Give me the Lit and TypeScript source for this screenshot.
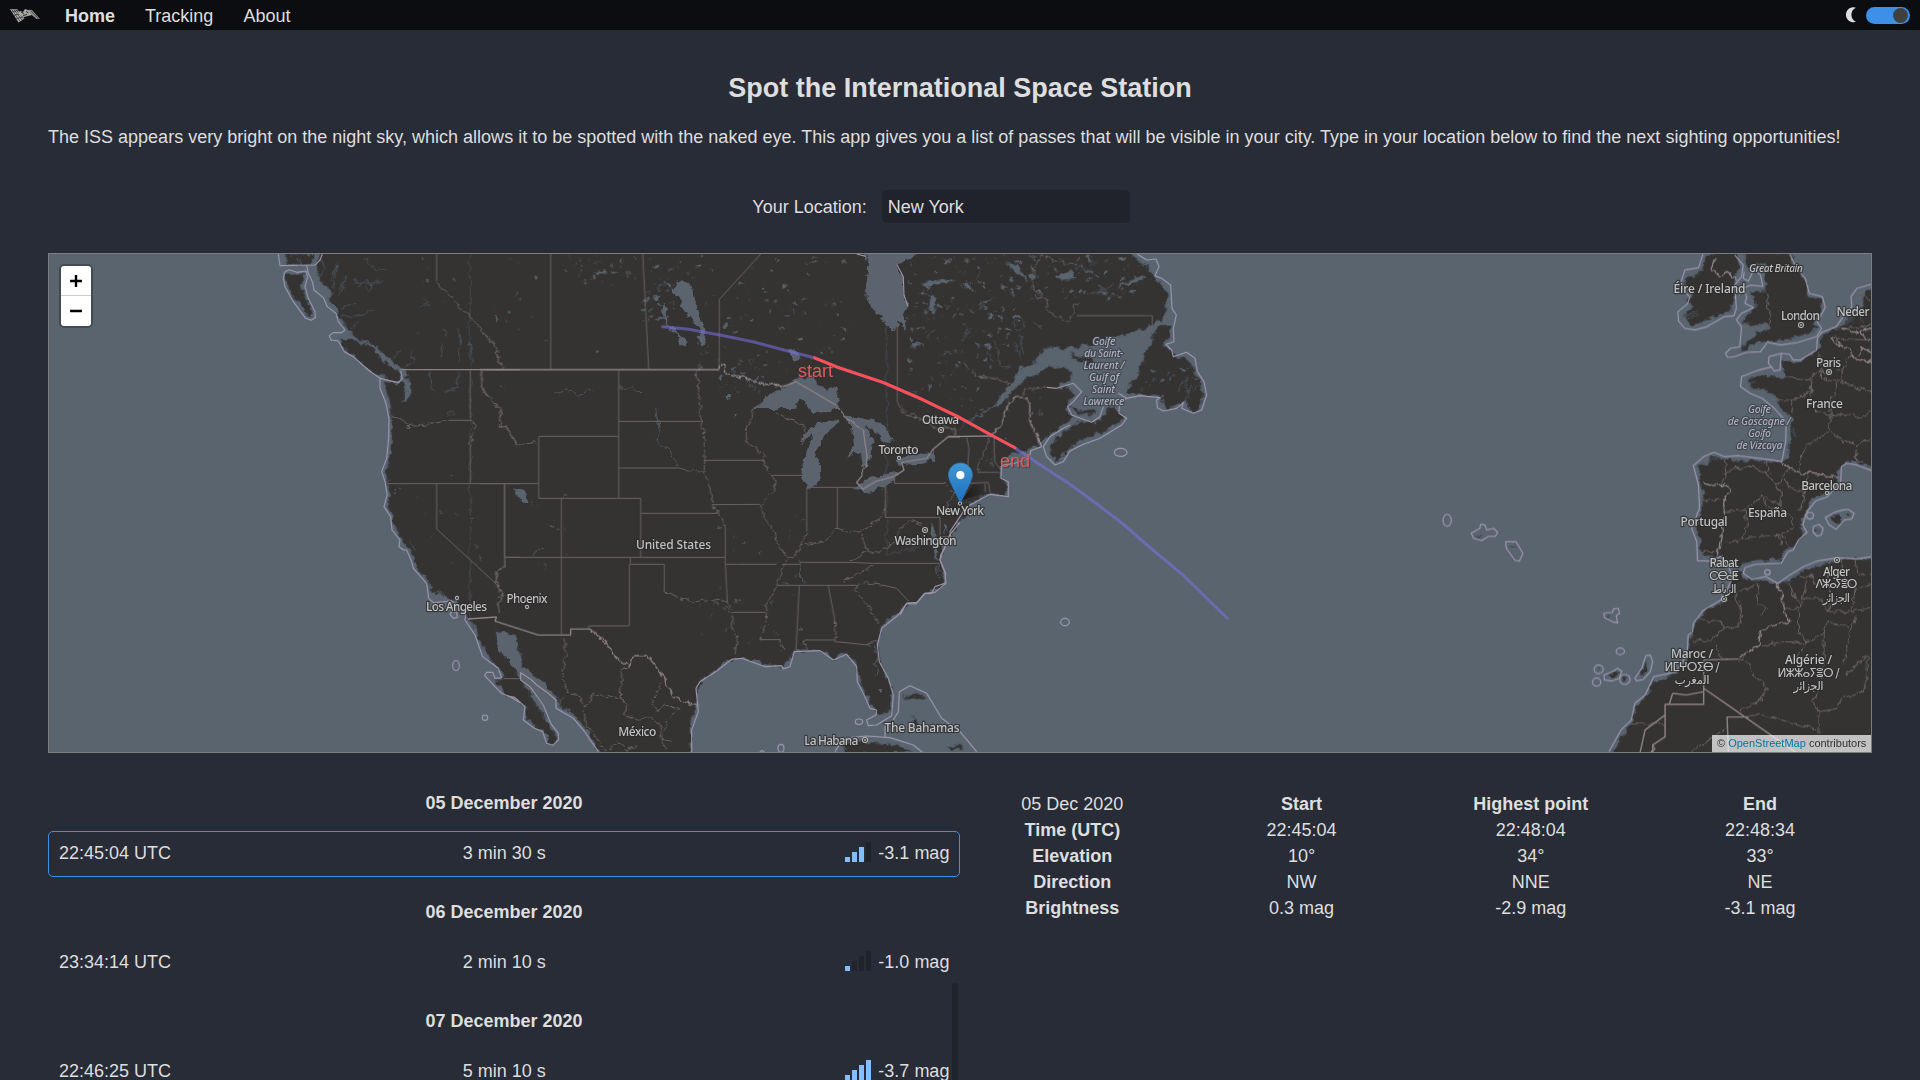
import { LitElement, html, svg, css } from "lit";
import { customElement, property } from "lit/decorators.js";

type Label = { t: string; x: number; y: number; w: number; kind?: "sea" | "native" | "isle" };
type Pass = { date: string; time: string; duration: string; mag: string; level: number; selected?: boolean };

const passes: Pass[] = [
  { date: "05 December 2020", time: "22:45:04 UTC", duration: "3 min 30 s", mag: "-3.1 mag", level: 3, selected: true },
  { date: "06 December 2020", time: "23:34:14 UTC", duration: "2 min 10 s", mag: "-1.0 mag", level: 1 },
  { date: "07 December 2020", time: "22:46:25 UTC", duration: "5 min 10 s", mag: "-3.7 mag", level: 4 },
];

const details: string[][] = [
  ["05 Dec 2020", "Start", "Highest point", "End"],
  ["Time (UTC)", "22:45:04", "22:48:04", "22:48:34"],
  ["Elevation", "10°", "34°", "33°"],
  ["Direction", "NW", "NNE", "NE"],
  ["Brightness", "0.3 mag", "-2.9 mag", "-3.1 mag"],
];

const labels: Label[] = [
  { t: "Los Angeles", x: 456.5, y: 611, w: 61 },
  { t: "Phoenix", x: 527, y: 603, w: 41 },
  { t: "United States", x: 673.5, y: 549, w: 75 },
  { t: "México", x: 637.3, y: 735.5, w: 38 },
  { t: "La Habana", x: 831.3, y: 744.5, w: 54 },
  { t: "The Bahamas", x: 922, y: 732, w: 75 },
  { t: "Ottawa", x: 940.5, y: 424, w: 37 },
  { t: "Toronto", x: 898.5, y: 454, w: 40 },
  { t: "New York", x: 960, y: 515, w: 48 },
  { t: "Washington", x: 925.5, y: 544.5, w: 62 },
  { t: "Golfe", x: 1103.8, y: 344.5, w: 23, kind: "sea" },
  { t: "du Saint-", x: 1103.8, y: 356.5, w: 39, kind: "sea" },
  { t: "Laurent /", x: 1104, y: 368.5, w: 41, kind: "sea" },
  { t: "Gulf of", x: 1104, y: 380.5, w: 30, kind: "sea" },
  { t: "Saint", x: 1103.5, y: 392.5, w: 23, kind: "sea" },
  { t: "Lawrence", x: 1103.8, y: 404.5, w: 41, kind: "sea" },
  { t: "Great Britain", x: 1776, y: 271.5, w: 54, kind: "isle" },
  { t: "Éire / Ireland", x: 1709.5, y: 293, w: 72 },
  { t: "London", x: 1800.5, y: 319.5, w: 39 },
  { t: "Neder", x: 1853, y: 315.5, w: 33 },
  { t: "Paris", x: 1828.5, y: 366.5, w: 25 },
  { t: "France", x: 1824.5, y: 407.5, w: 37 },
  { t: "Golfe", x: 1759.5, y: 412.5, w: 23, kind: "sea" },
  { t: "de Gascogne /", x: 1759.3, y: 424.5, w: 63, kind: "sea" },
  { t: "Golfo", x: 1759.5, y: 436.5, w: 23, kind: "sea" },
  { t: "de Vizcaya", x: 1759.5, y: 448.5, w: 46, kind: "sea" },
  { t: "Barcelona", x: 1826.8, y: 489.5, w: 51 },
  { t: "España", x: 1767.5, y: 517, w: 39 },
  { t: "Portugal", x: 1704, y: 526, w: 47 },
  { t: "Rabat", x: 1724, y: 567, w: 29 },
  { t: "ⵔⴱⴰⵟ", x: 1724, y: 580, w: 30, kind: "native" },
  { t: "الرباط", x: 1724, y: 593, w: 25, kind: "native" },
  { t: "Alger", x: 1836.5, y: 575.5, w: 27 },
  { t: "ⴷⵣⴰⵢⴻⵔ", x: 1836.5, y: 588, w: 42, kind: "native" },
  { t: "الجزائر", x: 1836.5, y: 602, w: 27, kind: "native" },
  { t: "Maroc /", x: 1692, y: 657.5, w: 42 },
  { t: "ⵍⵎⵖⵔⵉⴱ /", x: 1692, y: 671, w: 55, kind: "native" },
  { t: "المغرب", x: 1692, y: 684, w: 35, kind: "native" },
  { t: "Algérie /", x: 1808.5, y: 663.5, w: 47 },
  { t: "ⵍⵣⵣⴰⵢⴻⵔ /", x: 1808.5, y: 677, w: 62, kind: "native" },
  { t: "الجزائر", x: 1808.5, y: 690, w: 30, kind: "native" },
];

const capitals: number[][] = [
  [941, 430], [925, 530], [865, 740], [1801, 325], [1829, 372], [1724, 599], [1837, 560],
];
const towns: number[][] = [[457, 598], [527, 607], [899, 458], [960, 503.5], [1827, 493]];

/* Traced geometry, in thirds of a pixel; each sheet has its own origin. */
const sheets = { w: "translate(120 735)", c: "translate(1440 735)", e: "translate(2700 735)", d: "translate(4140 735) scale(1.033 1)" };

const land = svg`
  <g transform=${sheets.w}>
    <path d="M735 27H825L815 58H738ZM740 85L765 92L795 83L785 120L795 155L815 195L818 212L800 208L775 175L750 140L738 105Z"/>
    <path d="M850 15L825 60L838 95L845 115L865 130L875 150L868 165L888 190L895 210L905 230L918 245L935 268L960 285L1000 300L1022 320L1048 345L1080 368L1100 385L1092 400L1110 420L1108 460L1092 465L1100 425L1085 408L1075 415L1030 405L1042 440L1052 480L1054 530L1054 590L1050 640L1036 680L1043 700L1048 740L1045 785L1058 815L1064 850L1085 878L1095 898L1110 915L1122 940L1130 965L1148 990L1168 1015L1174 1042L1210 1047L1225 1062L1250 1070L1260 1090L1283 1118L1308 1155L1330 1215L1362 1250L1388 1275L1390 1300L1365 1307L1392 1330L1450 1368L1460 15Z"/>
    <path d="M900 278L930 280L960 292L1000 305L1020 325L1040 350L1065 365L1083 385L1078 408L1050 403L1020 392L990 375L960 350L930 322L912 305Z"/>
  </g>
  <g transform=${sheets.c}>
    <path d="M-30 15H1470V800L1410 860L1395 890L1382 940L1392 985L1396 1010L1380 1030L1340 1045L1310 1070L1280 1080L1230 1120L1202 1150L1192 1200L1198 1240L1217 1290L1237 1330L1237 1370L1225 1402L1200 1410L1183 1390L1158 1350L1140 1310L1128 1258L1100 1225L1060 1240L1035 1222L1000 1216L940 1218L930 1250L905 1264L865 1262L830 1248L780 1238L745 1247L700 1280L667 1302L650 1330L652 1380L638 1400L633 1450V1540H370L330 1470L300 1430L270 1400L240 1385L235 1358L200 1335L188 1306L165 1296L130 1266L128 1250L114 1215L110 1182L85 1164L48 1155L52 1185L62 1225L90 1245L97 1265L115 1290L133 1320L152 1350L177 1385L196 1420L217 1450L231 1475L226 1497L206 1492L193 1457L165 1442L140 1422L133 1380L108 1362L80 1352L45 1310L70 1300L68 1278L42 1252L10 1215L-12 1155L-30 1120Z"/>
    <path d="M1085 1524L1100 1495L1150 1487L1200 1500L1250 1495L1290 1524ZM1265 1355L1330 1345L1335 1358L1290 1362ZM1300 1410L1312 1440L1295 1438ZM1400 1505L1440 1500L1450 1512L1410 1515Z"/>
  </g>
  <g transform=${sheets.e}>
    <path d="M-40 15H690L712 45L748 65L750 85L780 118L803 140L800 200L788 222L752 243L700 257L680 272L620 282L560 302L500 310L440 307L420 322L410 352L370 367L340 402L310 447L280 482L215 522L180 548L270 492L312 470L342 435L372 405L402 385L440 368L480 362L510 375L512 400L470 427L500 425L520 450L505 470L500 497L518 515L500 535L460 560L436 580L424 600L380 615L330 628L308 645L300 668L300 690L312 706L322 725L320 750L298 745L268 745L240 757L192 775L186 795L178 830L150 880L-40 930Z"/>
    <path d="M505 325L545 335L580 350L592 362L560 357L530 345ZM805 235L815 245L808 270L795 300L822 332L860 342L880 370L898 405L908 450L895 488L872 498L850 465L825 485L800 490L786 470L790 457L750 450L710 450L680 443L684 428L705 405L722 360L740 320L760 270L780 242ZM450 598L490 565L530 530L600 530L620 500L640 480L655 500L675 520L640 545L600 562L560 580L510 608L470 650L450 630ZM508 480L540 500L580 492L590 505L555 512L520 500Z"/>
  </g>
  <g transform=${sheets.d}>
    <path d="M945 35L985 20H1040L1045 70L1030 95L1030 150L1022 198L985 207L945 227L905 240L882 215L905 182L893 165L905 145L885 125L893 92L930 85L940 60Z"/>
    <path d="M1060 20H1190L1200 60L1222 80L1237 115L1242 158L1280 165L1287 190L1265 215L1255 235L1275 247L1240 268L1200 280L1150 287L1120 290L1090 296L1065 312L1043 320L1065 290L1090 267L1132 247L1122 235L1090 242L1053 232L1065 210L1090 190L1087 155L1073 140L1115 135L1125 120L1120 85L1128 60L1090 52L1070 75L1058 50Z"/>
    <path d="M1440 130L1405 140L1402 172L1385 202L1350 225L1338 247L1310 255L1280 275L1275 310L1240 335L1215 352L1185 352L1165 340L1168 365L1180 397L1140 398L1118 385L1068 402L1078 430L1120 437L1155 460L1165 492L1195 515L1195 555L1188 605L1175 650L1130 650L1060 648L1000 642L968 635L945 655L920 660L927 690L935 720L938 760L932 810L918 855L930 880L933 930L985 935L1010 950L1040 968L1060 955L1100 945L1155 945L1175 915L1205 905L1232 863L1220 835L1235 800L1255 765L1290 745L1328 715L1330 680L1345 657L1385 650L1440 668Z"/>
    <path d="M1440 940L1370 943L1320 950L1270 962L1220 980L1190 1007L1150 1015L1110 1008L1060 1000L1042 975L1032 990L1020 1030L1000 1070L955 1092L917 1130L902 1170L897 1205L890 1240L862 1280L830 1300L792 1310L777 1345L742 1390L735 1425L697 1480L672 1540H1440Z"/>
    <path d="M1308 822L1325 808L1340 822L1325 838ZM1352 806L1366 808L1360 816ZM1265 855L1275 850L1270 862ZM668 1295L680 1280L695 1283L680 1300ZM760 1275L778 1245L775 1275L762 1297ZM702 1300L712 1294L716 1305L706 1310ZM632 1272L638 1270L636 1280ZM660 1110L672 1115L660 1118ZM375 902H392V906H378ZM285 870L298 874L288 876Z"/>
  </g>`;

const water = svg`
  <g transform=${sheets.c}>
    <path d="M48 1155L85 1164L110 1182L114 1215L128 1250L130 1266L165 1296L190 1308L205 1340L238 1362L215 1375L190 1390L165 1366L133 1320L115 1290L97 1265L90 1245L62 1225L52 1185Z"/>
    <path d="M1140 15L1155 30L1165 60L1158 130L1160 160L1190 205L1220 240L1243 257L1258 230L1278 255L1272 205L1284 180L1270 140L1268 100L1248 60L1290 45L1320 15Z"/>
    <path d="M583 115L610 106L635 122L642 160L657 205L672 250L680 292L660 302L655 250L620 205L598 165L581 145ZM560 195L545 170L550 210L560 245L590 248L600 275L620 290L617 310L602 302L590 262L563 252ZM520 155L545 152L535 165ZM930 312L955 315L960 340L945 353L930 340Z"/>
    <path d="M818 492L870 450L910 425L940 408L962 395L1000 398L1018 420L1040 437L1065 430L1080 470L1075 490L1040 502L1000 500L975 480L960 460L945 480L950 492L880 492Z"/>
    <path d="M962 592L975 560L1005 540L1035 530L1082 520L1070 540L1045 558L1030 585L1015 600L1005 630L1020 665L1020 695L1003 725L982 732L967 700L969 640L990 600L1000 568L985 575Z"/>
    <path d="M1090 515L1150 517L1198 530L1230 562L1244 592L1215 595L1195 570L1158 540L1180 590L1172 640L1148 675L1140 625L1118 622L1106 640L1105 622L1125 600L1120 560Z"/>
    <path d="M1118 725L1170 700L1210 690L1270 675L1240 705L1190 737L1150 742ZM1242 652L1270 633L1330 628L1362 620L1362 645L1310 657L1260 660Z"/>
    <path d="M106 730L130 735L144 765L130 777L115 755ZM765 508L775 512L768 520ZM1195 1335L1210 1335L1205 1350ZM740 452L755 455L742 470ZM345 310L358 318L346 322ZM1355 830L1365 860L1358 890L1372 930L1380 945L1366 935L1350 880ZM1390 840L1400 850L1395 870Z"/>
    <path class="stream" d="M220 445L260 430L290 450L335 435M416 425L460 430L485 445M530 495L540 545L530 590L570 620L590 660M60 420L72 435M160 930L190 910M1370 965L1380 1000M1183 1205L1190 1290M960 945L962 1010"/>
  </g>
  <g transform=${sheets.w}>
    <path d="M915 245L935 270L960 285L1005 310L1020 340L1060 370L1085 380L1070 360L1040 340L1025 315L985 295L950 278ZM1425 732L1440 735L1450 765L1435 760ZM1085 390L1105 405L1110 440L1100 468L1090 465L1102 440L1095 410Z"/>
    <path class="stream" d="M880 130L890 60L870 110M895 150L920 90M900 190L950 175M905 215L970 210L1000 190M930 250L960 230M975 40L1000 70L1040 72M940 105L975 120L1030 105M955 128L975 110L1000 125L985 140L972 130M1140 185L1175 180M1255 250L1262 300L1255 350M1210 250L1225 275M1290 290L1300 355M1200 340L1210 300M1170 380L1175 430L1190 440M1210 440L1250 430L1258 380M1225 515L1240 500M1200 790L1205 808M1110 890L1125 915M1060 345L1080 320M840 90L855 70L840 40M770 40L780 60M1090 370L1120 350L1115 320"/>
  </g>
  <g transform=${sheets.e}>
    <path d="M470 95L510 75L530 100L500 108ZM655 122L720 92L740 95L690 120ZM60 118L120 100L170 105L80 128ZM320 50L355 65L385 110L370 100L330 70ZM88 150L110 160L100 205L85 185ZM240 390L258 398L245 404ZM225 110L250 70L235 90Z"/>
    <path class="stream" d="M185 290L215 255M190 275L205 252M345 245A17 17 0 1 1 346 246M340 290L365 345M285 280L295 350L330 370M360 270L370 330M540 60L600 100M560 150L640 120M400 230L430 250M100 255L80 280M130 320L160 330M855 470L870 420M835 440L860 400M880 440L895 420M260 320L280 345M205 770L270 752M100 860L110 900M110 940L120 980"/>
  </g>
  <g transform=${sheets.d}>
    <path class="stream" d="M890 225L930 205M885 215L920 200M1340 240L1380 225M1345 230L1385 215M1195 560L1210 575M1070 410L1090 415"/>
  </g>`;

const coast = svg`
  <g transform=${sheets.w}>
    <path d="M715 27L720 62L825 60L840 45L847 27M735 80L748 74L770 82L798 78L803 95L795 125L805 160L825 200L826 218L813 226L797 220L760 170L735 125L730 100ZM800 62L805 85L818 112L822 135L850 158L862 185L888 205L895 230L915 255L905 263L880 263L868 272L873 285L895 288L913 320L940 335L985 375L1020 400L1075 413L1087 400L1082 378M1020 400L1020 430L1038 475L1047 520L1046 580L1040 640L1025 680L1035 710L1042 750L1032 785L1052 815L1056 855L1080 885L1077 905L1090 915L1100 915L1115 950L1120 970L1160 1015L1166 1060L1180 1073L1235 1068L1260 1085L1278 1110L1275 1125L1305 1170L1328 1235L1375 1270L1385 1298L1365 1300L1358 1282L1340 1282L1334 1292L1365 1325L1385 1345L1410 1355L1442 1374M1235 1100L1250 1103L1252 1117L1240 1120L1230 1108Z"/>
    <ellipse cx="1248" cy="1262" rx="10" ry="15"/><circle cx="1335" cy="1418" r="8"/>
  </g>
  <g transform=${sheets.c}>
    <path d="M80 1352L105 1358L135 1385L130 1425L160 1448L188 1460L200 1495L218 1501L235 1485L235 1465L212 1435L190 1380L150 1325L122 1305L122 1283L155 1305L170 1320L205 1345L228 1365L228 1390L280 1420L310 1455L355 1520M635 1524L635 1455L655 1400L648 1330L660 1310L710 1278L755 1243L785 1240L855 1265L905 1262L910 1272L930 1265L943 1220L1020 1217L1060 1245L1100 1228L1130 1265L1132 1310L1155 1355L1170 1390L1190 1395L1188 1410L1160 1425L1165 1442L1190 1440L1235 1412L1240 1350L1225 1300L1198 1250L1192 1200L1205 1150L1255 1110L1280 1075L1310 1072L1335 1045L1365 1042L1398 1015L1395 985L1380 945L1395 905L1410 868L1440 832M1240 1425L1255 1400L1258 1340L1290 1322L1340 1345L1385 1420L1440 1460L1490 1520M1065 1520L1090 1480L1160 1473L1230 1478L1300 1500L1330 1524M1215 1440L1215 1475"/>
    <ellipse cx="1137" cy="1430" rx="11" ry="8"/><ellipse cx="903" cy="1510" rx="9" ry="12"/><path d="M838 1524Q846 1510 854 1524"/>
    <path d="M1130 27L1158 34M1250 58L1270 95L1272 150L1284 185"/>
  </g>
  <g transform=${sheets.e}>
    <path d="M712 27L740 45L768 42L777 65L765 92L785 100L812 120L816 190L829 210L820 250L822 290L798 298L815 315L820 335L860 322L885 340L892 380L912 410L920 450L905 495L880 505L845 490L850 472L830 490L790 498L772 488L770 465L780 458L720 452L680 460L658 475L657 505L680 520L665 540L600 580L545 600L510 618L490 650L465 660L440 635L430 605L450 575L490 550L510 540M392 617L425 605L415 578M392 617L388 640L345 655L305 660L303 700L325 710L325 755L270 748L195 788L190 800L150 860L152 875L122 930L120 945L137 985L135 1015L105 1025L95 1045L75 1045L48 1077L20 1075L0 1110M470 430L520 415L545 440L520 470L503 485L515 510L575 532L600 515L610 485M440 427L470 430M655 445L680 460"/>
    <ellipse cx="662" cy="622" rx="19" ry="12"/><ellipse cx="495" cy="1131" rx="13" ry="11"/>
  </g>
  <g transform=${sheets.d}>
    <path d="M938 27L925 68L885 75L875 110L885 142L900 155L893 177L865 200L867 228L885 250L915 255L950 245L1000 215L1028 212L1035 190L1030 120L1050 95L1055 60L1030 30M1190 27L1210 70L1235 100L1247 145L1285 155L1293 187L1270 232L1283 250L1268 275L1215 292L1165 300L1125 292L1105 320L1065 322L1030 335L1010 337L1003 325L1018 310L1045 305L1050 245L1035 225L1050 205L1085 188L1060 175L1065 157L1055 130L1075 120L1112 124L1105 90L1085 75L1070 108L1055 100L1058 80M1427 118L1385 130L1368 155L1370 185L1345 215L1325 245L1283 262L1270 280L1268 315L1220 345L1200 345L1190 328L1165 325L1130 335L1128 355L1145 378L1162 375L1165 325M1140 365L1100 375L1050 395L1047 425L1075 445L1110 460L1145 490L1180 530L1178 590L1167 650L1140 645L1040 632L1000 635L970 622L940 635L910 662L925 720L928 790L905 850L920 890L922 947L960 948L990 935L1015 970L1022 1000L1010 1030L990 1065L940 1095L910 1135L908 1160L895 1170L893 1210L885 1240L860 1280L795 1295L770 1350L740 1375L730 1425L700 1455L665 1520M1427 677L1385 660L1355 655L1340 665L1338 710L1320 730L1300 755L1265 768L1240 800L1228 840L1240 862L1215 885L1200 915L1185 920L1165 955L1090 958L1060 968L1055 985L1080 1003L1120 995L1155 1015L1190 990L1230 965L1270 948L1330 938L1385 942L1427 935"/>
    <ellipse cx="195" cy="826" rx="12" ry="18"/><path d="M265 865L290 850L292 838L305 840L310 855L330 850L342 862L335 874L315 874L295 887L272 880ZM365 890L395 890L415 925L405 948L392 946L367 910Z"/>
    <path d="M650 1105L675 1102L678 1092L692 1090L696 1105L686 1112L690 1134L675 1130L652 1118ZM740 1300L760 1270L772 1232L785 1230L792 1250L785 1280L765 1303L745 1308ZM650 1290L675 1280L690 1270L702 1278L695 1300L672 1308L652 1305Z"/>
    <ellipse cx="698" cy="1219" rx="12" ry="10"/><circle cx="635" cy="1273" r="13"/><circle cx="629" cy="1311" r="12"/><circle cx="711" cy="1303" r="15"/><circle cx="1249" cy="812" r="10"/><circle cx="1125" cy="982" r="8"/>
    <path d="M1293 818L1325 800L1345 795L1360 793L1377 805L1370 822L1348 825L1325 853L1305 840ZM1258 845L1275 838L1287 850L1282 870L1270 874L1258 862Z"/>
  </g>`;

const states = svg`
  <g transform=${sheets.w}>
    <path d="M1190 27V110M1043 716H1440M1291 377V520M1291 600V716M1325 377V427M1190 716V852L1372 1020M1393 716V937H1440M1225 526H1294M1390 1301H1440"/>
    <g class="rough"><path d="M1190 110L1200 128L1225 145L1260 190L1300 225L1350 285L1372 310L1376 350L1392 372M1325 427L1350 465L1384 495L1380 545L1400 545L1430 600M1291 520L1308 542L1287 600M1056 513L1085 518L1100 545L1165 540L1225 526M1393 937L1392 972L1370 975L1372 1020L1388 1050L1375 1075L1378 1105"/></g>
  </g>
  <g transform=${sheets.c}>
    <path d="M212 27V372M488 27L506 372M718 372V163L842 27M416 377V760M416 529H668M416 669H600M176 574H416M176 574V760H482V937M482 805H712M0 716H176M74 716V965M74 937H736M244 760V1168M451 937V958H553V1040M448 958V1143H326V1152M736 845V958L742 1075M736 958H890M757 1102H855M672 646H850M697 779L840 778M875 691H993L1000 620L1022 560L990 553L965 600M980 727H1125M980 727V860M1072 727V850M1216 700V817H1380M1243 690V715H1395M1380 817V875H1410M960 952L1110 952L1178 955H1378M890 1021H1130M958 1023L948 1215M1045 1023L1065 1130M975 1185H1065M838 1184H902M1068 1190L1165 1200M1205 1020L1250 1030L1285 1068M1252 235V470M882 492L910 425M820 490L870 460H896M905 958H960"/>
    <g class="rough"><path d="M0 255L45 300L55 350L72 372M5 377V425L30 460L62 495L60 545L80 545L110 600L172 592M600 669L620 678L650 676L672 690M650 377L655 430L662 490L664 540L672 560L674 640L672 680L690 730L697 780L725 820L736 845M553 1040L600 1058L640 1072L665 1065L700 1068L725 1066L752 1080L757 1140L772 1180L765 1225M820 492L815 520L798 545L800 590L850 630L855 665L888 710L880 740L845 780L850 820L885 860L890 890L915 930L925 940L905 975L885 1030L860 1080L858 1130L840 1180M902 1184L908 1215M886 500L920 520L970 540L975 562M980 860L965 900L945 930L920 935M965 900L1030 890L1072 850L1110 862L1145 860L1175 835L1200 820L1216 780M1145 860L1150 890L1165 920L1200 925L1240 890L1255 860L1290 825L1325 840M1165 915L1110 952M1178 962L1130 990L1088 1010M1065 1130L1068 1190M1165 1205L1168 1192L1190 1190M975 1185L980 1210M1120 1030L1150 1013L1205 1020M1120 1030L1160 1080L1200 1140M1252 470L1270 505L1340 520L1400 545L1420 560M1395 715L1425 745L1400 770L1410 800M74 965L50 975L52 1020L68 1050L55 1075L58 1105M250 1172L258 1230L245 1290L262 1345L300 1352L315 1385L340 1350L420 1360L425 1280L445 1262M420 1360L440 1380L435 1410L470 1425L510 1415L545 1440L540 1480L560 1510M545 1310L530 1350L515 1365L530 1400L555 1380L600 1390L560 1430L545 1480L580 1490M310 1395L320 1440L350 1480L380 1524M262 1345L240 1365M390 1510L410 1490L440 1515L470 1500"/></g>
  </g>
  <g transform=${sheets.e}>
    <path d="M530 212H757V243L640 385M200 577L207 610L202 680M202 715L265 712L270 742M232 682H298M282 575L284 650L300 670M255 715V740M610 485L600 478M490 550L515 525"/>
    <g class="rough"><path d="M430 30L400 70L395 110L412 160L440 160L445 200L485 220L505 235L522 205L520 180L540 170M435 35L480 50L500 55L530 60L535 30M265 575L262 600L240 640L232 682M0 480L25 512L80 530L100 550L165 550L165 570M330 417L290 400L230 395L185 350M370 450L375 430L440 425"/></g>
  </g>
  <g class="rough"><g transform=${sheets.d}>
    <path d="M1120 135L1130 160L1125 190L1137 215L1130 245M1050 245L1125 240M1180 397L1250 402L1250 440L1200 465L1155 465M1250 400L1262 385L1285 375L1275 345L1275 320M1285 375L1285 400L1310 408L1338 405L1340 380L1325 372M1340 380L1365 330M1325 410L1325 440L1310 455L1310 510L1300 560L1275 580L1240 600L1222 625L1220 680M1255 400L1250 460L1265 500L1310 508M1310 510L1350 505L1395 520L1427 500M1340 410L1390 430L1427 435M1310 560L1340 590L1365 590L1385 600L1427 580M1190 465L1200 500M1385 600L1380 640L1400 655M1315 255L1325 250L1380 250L1427 240M1310 280L1427 285M1000 642L1005 690L990 715M1000 690L1020 670L1080 665L1130 690L1120 650M1120 680L1150 720L1165 740L1165 780L1110 750L1085 780L1060 790L1065 840L1055 880L1100 875L1160 870L1165 900M1110 750L1120 785L1160 790L1165 770M1165 700L1190 670M1150 720L1175 700L1190 730L1235 740L1230 780L1215 800M1235 740L1240 690M1165 790L1190 810L1200 850L1150 875M1000 800L1060 795M1005 890L1040 890L1060 865M935 765L985 765M985 920L935 920M1165 870L1185 900M905 1190L960 1185L1000 1150L1040 1145L1050 1100L1035 1060L1030 1040M925 1115L950 1130L985 1125L1000 1150M1030 1040L1100 1020L1095 1070L1125 1090L1105 1110M970 1190L985 1230L1010 1245M1170 1090L1220 1090L1230 1050L1240 1000M1190 1010L1200 1050L1225 1080M1230 1060L1280 1060L1300 1100L1360 1100L1427 1090M1250 985L1265 1020L1300 1010L1310 960M1300 1010L1320 1060L1300 1100M1340 950L1350 1000L1380 1030L1427 1020M1350 1000L1320 1030M1380 945L1385 990L1427 985M1380 1030L1370 1100M1215 1090L1215 1160L1240 1195L1290 1160L1300 1130L1370 1150L1380 1110M1190 985L1240 1000L1260 990M1105 1200L1180 1190L1240 1195L1190 1250M1370 1150L1345 1250M1290 1160V1250L1270 1350L1255 1370L1275 1400V1470M1040 1245L1070 1250L1085 1290L1125 1330L1100 1370L1045 1395M1275 1400L1330 1390L1340 1360L1400 1340L1415 1300V1230L1350 1290M735 1437L828 1437M1065 1415L1100 1408L1270 1452M1010 1445L905 1522M1370 130L1427 165M1400 165V230"/>
  </g></g>`;

const frontiers = svg`
  <g transform=${sheets.w}><path d="M1080 374H1440M1283 1122L1370 1116"/></g>
  <g transform=${sheets.c}>
    <path d="M0 374H718M910 425L948 410L1068 480M1150 558L1162 640M1148 690L1130 712L1148 732L1190 708L1240 695L1272 675L1265 652L1340 640L1360 612L1405 575H1440M50 1116L45 1128L175 1170H272V1152H330"/>
    <g class="rough"><path d="M718 374V357L733 360L738 388L770 395L800 400L850 420L880 415L910 425M1068 480L1100 520L1150 558M1162 640L1148 690M330 1152L385 1200L400 1230L445 1262L465 1232L500 1232L535 1270L580 1355L610 1370L655 1383"/></g>
  </g>
  <g transform=${sheets.e}>
    <path d="M145 575L270 573"/>
    <g class="rough"><path d="M270 573L290 555L305 535L320 490L345 455L380 460L392 475L393 540L410 565L420 600"/></g>
  </g>
  <g transform=${sheets.d}>
    <path d="M940 1245V1378H828V1475L792 1500V1524M940 1330L1010 1380L1210 1524M1012 1524L1008 1416H1070M850 1345L840 1378M850 1345L890 1350L940 1340M828 1410L770 1455L755 1524M940 1245L1040 1242"/>
    <g class="rough"><path d="M960 75L990 95L1005 80L1040 108M975 40L960 75M1168 652L1195 672L1220 685L1250 685L1290 690L1330 698M935 715L965 722L1000 718L1018 738L998 768L1000 810L995 850L990 880L980 930M1150 1010L1168 1050L1170 1090L1190 1130L1130 1145L1105 1160L1100 1200L1045 1240M1310 275L1330 300L1365 312L1380 340L1427 350M1340 250L1380 262L1427 250M1390 330L1400 305L1427 320M1395 260L1410 280L1427 285M790 1524L800 1495"/></g>
  </g>`;

/** Deterministic scatter of small lakes: [x0, y0, x1, y1, count, largest radius]. */
const lakeFields: number[][] = [
  [1690, 765, 2120, 850, 60, 7], [1920, 850, 2020, 960, 50, 8], [2080, 765, 2560, 1120, 90, 6],
  [2720, 765, 3060, 1100, 150, 8], [3090, 770, 3420, 900, 80, 8], [2720, 1100, 2960, 1250, 34, 6],
  [1250, 770, 1640, 1060, 26, 5], [2150, 1080, 2290, 1180, 40, 6], [1180, 1380, 1700, 1700, 24, 4],
  [2150, 1550, 2420, 1960, 36, 4], [3560, 1010, 3600, 1220, 24, 5], [3420, 1110, 3560, 1170, 24, 5],
  [2960, 1350, 3100, 1400, 20, 5], [2100, 1800, 2240, 1920, 14, 4], [3000, 1130, 3140, 1350, 12, 5],
];

function scatterLakes(): string {
  let seed = 20201205;
  const rnd = () => {
    seed = (seed * 1664525 + 1013904223) >>> 0;
    return seed / 4294967296;
  };
  let d = "";
  for (const [x0, y0, x1, y1, count, max] of lakeFields) {
    for (let i = 0; i < count; i++) {
      const x = x0 + rnd() * (x1 - x0);
      const y = y0 + rnd() * (y1 - y0);
      const r = 1.5 + rnd() * rnd() * max;
      const k = r * (0.7 + rnd() * 1.2);
      const s = (rnd() - 0.5) * r * 1.6;
      d += `M${(x - k).toFixed(1)} ${(y + s).toFixed(1)}L${x.toFixed(1)} ${(y - r).toFixed(1)}L${(x + k).toFixed(1)} ${(y - s).toFixed(1)}L${x.toFixed(1)} ${(y + r * 0.7).toFixed(1)}Z`;
    }
  }
  return d;
}
const lakes = scatterLakes();

@customElement("pass-map")
class PassMap extends LitElement {
  static styles = css`
    :host { display: block; position: relative; box-sizing: border-box; height: 500px; border: 1px solid #7c7d80; background: #5a646e; overflow: hidden; }
    .canvas { display: block; width: 100%; height: 100%; }
    .land { fill: #353332; stroke: #4b5865; stroke-width: 2; }
    .water { fill: #5a646e; }
    .stream { fill: none; stroke: #4c5862; stroke-width: 3; }
    .shelf { fill: none; stroke: #5b687a; stroke-width: 9; stroke-linejoin: round; }
    .coast { fill: none; stroke: #9c93a3; stroke-width: 3.4; stroke-linejoin: round; }
    .states { fill: none; stroke: #6a6362; stroke-width: 3; }
    .frontiers { fill: none; stroke: #8d8187; stroke-width: 4.2; stroke-linejoin: round; }
    .rough { filter: url(#rough); }
    .label { font: 500 12px "Noto Sans", "DejaVu Sans", sans-serif; fill: #c2c2c2; stroke: #2c2c2c; stroke-width: 2.4px; stroke-opacity: .75; paint-order: stroke; text-anchor: middle; stroke-linejoin: round; }
    .sea { font-size: 10.5px; font-style: italic; fill: #b0aeba; stroke: #3b424c; }
    .isle { font-size: 10.5px; font-style: italic; }
    .native { font: 12px "DejaVu Sans", sans-serif; }
    .dot { fill: #303030; stroke: #b4b4b4; stroke-width: 1.1; }
    .core { fill: #b4b4b4; }
    .track { fill: none; stroke-width: 3; stroke-linecap: round; stroke-linejoin: round; }
    .orbit { stroke: #7a71e8; stroke-opacity: .55; }
    .visible { stroke: #ff5055; }
    .tip { font: 18px "Liberation Sans", Arial, sans-serif; fill: #e05a5e; text-anchor: middle; text-shadow: 1px 1px 1px #333a; }
    .zoom { position: absolute; left: 10px; top: 10px; width: 30px; border: 2px solid rgba(0, 0, 0, .25); border-radius: 5px; background-clip: padding-box; overflow: hidden; }
    .zoom button { display: flex; align-items: center; justify-content: center; box-sizing: border-box; width: 30px; height: 30px; padding: 0; border: 0; background: #fff; }
    .zoom button:first-child { border-bottom: 1px solid #ccc; }
    .credit { position: absolute; right: 0; bottom: 0; box-sizing: border-box; width: 159px; height: 17px; padding: 0 5px; background: rgba(255, 255, 255, .7); color: #333; font: 11px/16px "Liberation Sans", Arial, sans-serif; white-space: nowrap; }
    .credit a { color: #0078a8; text-decoration: none; }
  `;
  render() {
    return html`
      <svg class="canvas" viewBox="49 254 1822 498">
        <defs>
          <filter id="jag" filterUnits="userSpaceOnUse" x="100" y="700" width="5600" height="1650">
            <feTurbulence type="fractalNoise" baseFrequency="0.045" numOctaves="3" seed="4"/>
            <feDisplacementMap in="SourceGraphic" scale="24" xChannelSelector="R" yChannelSelector="G"/>
          </filter>
          <filter id="rough" filterUnits="userSpaceOnUse" x="-100" y="-100" width="6000" height="2500">
            <feTurbulence type="fractalNoise" baseFrequency="0.055" numOctaves="2" seed="9"/>
            <feDisplacementMap in="SourceGraphic" scale="20" xChannelSelector="R" yChannelSelector="G"/>
          </filter>
          <linearGradient id="pin" x1="0" y1="0" x2="0" y2="1"><stop offset="0" stop-color="#4197d4"/><stop offset="1" stop-color="#1c6fbf"/></linearGradient>
          <linearGradient id="shade" x1="0" y1="0" x2="1" y2="0"><stop offset="0" stop-color="#000" stop-opacity=".5"/><stop offset="1" stop-color="#000" stop-opacity="0"/></linearGradient>
        </defs>
        <g transform="scale(.33333)">
          <g class="shelf">${coast}</g>
          <g filter="url(#jag)">
            <g class="land">${land}</g>
            <g class="water">${water}<path d=${lakes}/></g>
          </g>
          <g class="states">${states}</g>
          <g class="frontiers">${frontiers}</g>
          <g class="coast">${coast}</g>
        </g>
        ${capitals.map(([x, y]) => svg`<circle class="dot" cx=${x} cy=${y} r="2.5"/><circle class="core" cx=${x} cy=${y} r="1"/>`)}
        ${towns.map(([x, y]) => svg`<circle class="dot" cx=${x} cy=${y} r="1.6"/>`)}
        ${labels.map((l) => svg`<text class="label ${l.kind ?? ""}" x=${l.x} y=${l.y} textLength=${l.w}>${l.t}</text>`)}
        <path class="track orbit" d="M662.7 326.7L687 329L720 335L753 341.7L787 350.7L814 357.7L838 367.5L883 382.5L920 398.5L960 418L988 433.5L1015 448L1043 466.7L1070 484.3L1097 504L1123 524L1153 550L1183 575L1207 598.5L1227.3 618.3"/>
        <path class="track visible" d="M814.5 357.8L838 367.3L883 382.3L920 398.3L960 417.7L988 433.3L1015 447.8"/>
        <text class="tip" x="815.5" y="377">start</text>
        <text class="tip" x="1015" y="467">end</text>
        <path fill="url(#shade)" d="M962 500L973 485L986 484L986 493Z"/>
        <g transform="translate(948 462.5)">
          <path fill="url(#pin)" stroke="#2f7fc0" stroke-width=".8" d="M12.4 .5C5.8 .5.5 5.8.5 12.3C.5 15 1.5 17.6 2.6 20L12.4 40L22.2 20C23.3 17.6 24.3 15 24.3 12.3C24.3 5.8 19 .5 12.4 .5Z"/>
          <circle cx="12.4" cy="12.5" r="4.6" fill="#fff" stroke="#2d79b8" stroke-width=".8"/>
        </g>
      </svg>
      <div class="zoom">
        <button aria-label="Zoom in"><svg width="12" height="12"><path d="M0 6H12M6 0V12" stroke="#000" stroke-width="2.4"/></svg></button>
        <button aria-label="Zoom out"><svg width="12" height="12"><path d="M0 6H12" stroke="#000" stroke-width="2.4"/></svg></button>
      </div>
      <div class="credit">© <a>OpenStreetMap</a> contributors</div>
    `;
  }
}

@customElement("pass-strength")
class PassStrength extends LitElement {
  @property({ type: Number }) level = 0;
  static styles = css`
    :host { display: flex; align-items: flex-end; gap: 2px; height: 20px; }
    .bar { width: 5px; background: #21232c; }
    .on { background: #84beff; }
  `;
  render() {
    return html`${[1, 2, 3, 4].map((n) => html`<div class="bar ${n <= this.level ? "on" : ""}" style="height:${n * 5}px"></div>`)}`;
  }
}

@customElement("app-root")
class AppRoot extends LitElement {
  static styles = css`
    :host { display: flex; flex-direction: column; height: 1080px; overflow: hidden; background: #282c37; color: #dedede; font: 18px/21px "Liberation Sans", Arial, sans-serif; }
    .nav { display: flex; align-items: center; flex: none; height: 30px; padding: 0 10px; background: #0b0d10; box-sizing: border-box; }
    .logo { width: 30px; height: 16px; margin-right: 25px; }
    .links { display: flex; gap: 30px; flex: 1; padding-top: 2px; }
    .active { font-weight: bold; }
    .moon { width: 11px; height: 16px; margin-right: 9px; }
    .switch { display: flex; justify-content: flex-end; align-items: center; width: 44px; height: 17px; padding-right: 2px; box-sizing: border-box; border-radius: 9px; background: #3c90e8; }
    .knob { width: 15px; height: 15px; border-radius: 50%; background: #404041; }
    .main { display: flex; flex-direction: column; padding: 0 48px; }
    h1 { margin: 42px 0 0; font-size: 27px; line-height: 32px; text-align: center; }
    p { margin: 23px 0 0; letter-spacing: .004px; }
    .search { display: flex; align-items: center; justify-content: center; gap: 15px; margin: 42px 38px 30px 0; height: 33px; }
    .search span { padding-top: 1px; }
    .field { box-sizing: border-box; width: 248px; height: 33px; padding: 7px 6px 5px; border-radius: 5px; background: #21232c; }
    .results { display: flex; }
    .list { display: flex; flex-direction: column; width: 912px; height: 327px; overflow: hidden; position: relative; }
    .day { flex: none; height: 78px; box-sizing: border-box; padding-top: 40px; text-align: center; font-weight: bold; }
    .row + .day { height: 63px; padding-top: 25px; }
    .row { flex: none; display: grid; grid-template-columns: 1fr 1fr 1fr; align-items: center; box-sizing: border-box; height: 46px; padding: 0 9.6px 1px 10px; border: 1px solid transparent; border-radius: 5px; }
    .selected { border-color: #3c90e8; }
    .mid { text-align: center; }
    .mag { display: flex; justify-content: flex-end; align-items: center; gap: 7px; }
    pass-strength { margin-bottom: 3px; }
    .thumb { position: absolute; right: 2px; top: 230px; width: 6px; height: 120px; border-radius: 3px; background: #21232c; }
    .facts { display: grid; grid-template-columns: repeat(4, 229.25px); grid-auto-rows: 26px; align-content: start; margin: 38px -3px 0 -2.3px; line-height: 26px; text-align: center; }
    .strong { font-weight: bold; }
  `;
  render() {
    return html`
      <div class="nav">
        <svg class="logo" viewBox="0 0 30 16">
          <path d="M0 2H7L14.5 11.5L8.5 15.5Z" fill="#b5b4b2"/>
          <path d="M1.5 2L10 14.5M3.6 2L12 13.3M5.6 2L13.6 12.4M1.5 5L8.5 3.4M3.5 8.5L11 6.5M5.5 12L13.5 9.5" stroke="#33343a" stroke-width=".8"/>
          <path d="M8 6L10 4L13 5L15 2L18 3L21 4L22 8L18 9L14 10L11 9Z" fill="#a9a8a4"/>
          <path d="M11 5L14 6.5M16 4.5L18.5 6M13 8.5L17 7.5" stroke="#2b2b2c"/>
          <path d="M19 2.5L22 3L30 12L26.5 12L20.5 7Z" fill="#8b8a87"/>
          <path d="M21 4L28.5 11.5" stroke="#3d3d3e" stroke-width=".7"/>
        </svg>
        <div class="links"><span class="active">Home</span><span>Tracking</span><span>About</span></div>
        <svg class="moon" viewBox="0 0 11 16"><path d="M10 .7A7.5 7.5 0 1 0 10 14.8C6.6 13.4 5.4 10.7 5.4 7.8S6.6 2.2 10 .7Z" fill="#dedede"/></svg>
        <div class="switch"><div class="knob"></div></div>
      </div>
      <div class="main">
        <h1>Spot the International Space Station</h1>
        <p>The ISS appears very bright on the night sky, which allows it to be spotted with the naked eye. This app gives you a list of passes that will be visible in your city. Type in your location below to find the next sighting opportunities!</p>
        <div class="search"><span>Your Location:</span><div class="field">New York</div></div>
        <pass-map></pass-map>
        <div class="results">
          <div class="list">
            ${passes.map((p) => html`
              <div class="day">${p.date}</div>
              <div class="row ${p.selected ? "selected" : ""}">
                <span>${p.time}</span><span class="mid">${p.duration}</span>
                <span class="mag"><pass-strength .level=${p.level}></pass-strength>${p.mag}</span>
              </div>`)}
            <div class="thumb"></div>
          </div>
          <div class="facts">
            ${details.map((r, i) => r.map((c, j) => html`<span class=${(i === 0) !== (j === 0) ? "strong" : ""}>${c}</span>`))}
          </div>
        </div>
      </div>
    `;
  }
}
